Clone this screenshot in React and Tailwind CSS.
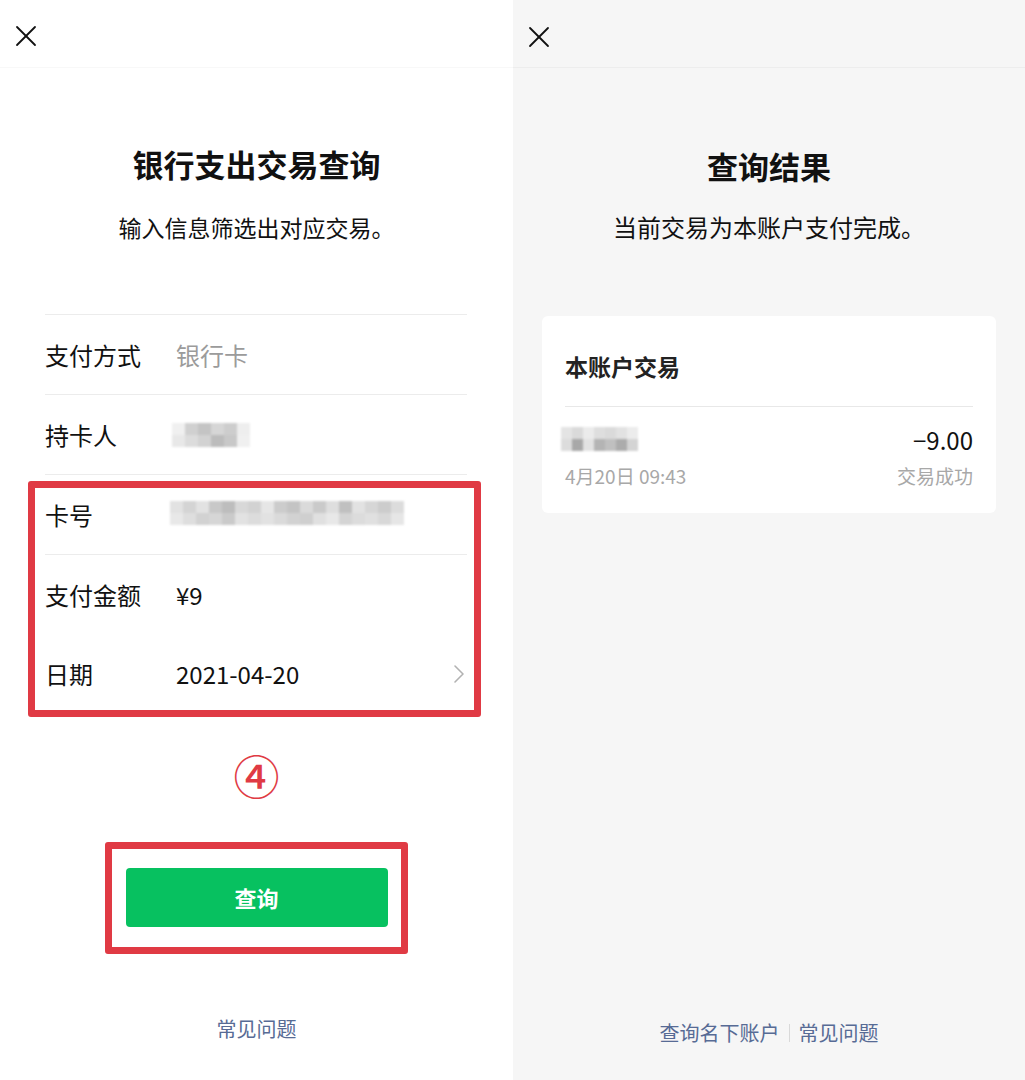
import { X, ChevronRight } from "lucide-react";

const font = "font-['Noto_Sans_CJK_SC','Noto_Sans',sans-serif]";

// mosaic blur placeholder for hidden personal info
function Mosaic({ cells, className = "", size = "w-[13px] h-[12px]" }) {
  return (
    <div className={`flex blur-[1px] ${className}`}>
      {cells.map((c, i) => (
        <div key={i} className="flex flex-col">
          <div className={`${size} ${c[0]}`} />
          <div className={`${size} ${c[1]}`} />
        </div>
      ))}
    </div>
  );
}

const holderCells = [
  ["bg-[#f0f0f0]", "bg-[#e8e8e8]"],
  ["bg-[#d0d0d0]", "bg-[#dcdcdc]"],
  ["bg-[#c4c4c4]", "bg-[#d2d2d2]"],
  ["bg-[#d6d6d6]", "bg-[#bcbcbc]"],
  ["bg-[#cdcdcd]", "bg-[#c8c8c8]"],
  ["bg-[#eeeeee]", "bg-[#f0f0f0]"],
];

const cardCells = [
  ["bg-[#e2e2e2]", "bg-[#e8e8e8]"],
  ["bg-[#d4d4d4]", "bg-[#dedede]"],
  ["bg-[#e2e2e2]", "bg-[#d2d2d2]"],
  ["bg-[#c8c8c8]", "bg-[#d6d6d6]"],
  ["bg-[#bdbdbd]", "bg-[#cacaca]"],
  ["bg-[#d8d8d8]", "bg-[#e2e2e2]"],
  ["bg-[#d2d2d2]", "bg-[#dcdcdc]"],
  ["bg-[#e6e6e6]", "bg-[#e2e2e2]"],
  ["bg-[#cccccc]", "bg-[#dadada]"],
  ["bg-[#c4c4c4]", "bg-[#d2d2d2]"],
  ["bg-[#dadada]", "bg-[#cfcfcf]"],
  ["bg-[#cacaca]", "bg-[#e0e0e0]"],
  ["bg-[#dedede]", "bg-[#e8e8e8]"],
  ["bg-[#c0c0c0]", "bg-[#d4d4d4]"],
  ["bg-[#e2e2e2]", "bg-[#dcdcdc]"],
  ["bg-[#d6d6d6]", "bg-[#e0e0e0]"],
  ["bg-[#cccccc]", "bg-[#d8d8d8]"],
  ["bg-[#dcdcdc]", "bg-[#e6e6e6]"],
];

const nameCells = [
  ["bg-[#e4e4e4]", "bg-[#dcdcdc]"],
  ["bg-[#dadada]", "bg-[#a8a8a8]"],
  ["bg-[#ebebeb]", "bg-[#e2e2e2]"],
  ["bg-[#dedede]", "bg-[#b4b4b4]"],
  ["bg-[#dadada]", "bg-[#c0c0c0]"],
  ["bg-[#e2e2e2]", "bg-[#acacac]"],
  ["bg-[#ececec]", "bg-[#d4d4d4]"],
];

function Row({ label, children, border = true, chevron }) {
  return (
    <div className={`h-[80px] flex items-center ${border ? "border-t border-[#ececec]" : ""}`}>
      <div className="w-[131px] text-[24px] text-[#111]">{label}</div>
      <div className="flex-1 text-[24px] text-[#111]">{children}</div>
      {chevron && <ChevronRight className="w-[32px] h-[32px] text-[#b2b2b2] -mr-[8px]" strokeWidth={1.2} />}
    </div>
  );
}

function QueryPanel() {
  return (
    <div className="w-[513px] h-[1080px] bg-white flex flex-col">
      <div className="h-[68px] flex items-start pt-[18px] pl-[8px] border-b border-[#f8f8f8]">
        <X className="w-[36px] h-[36px] text-[#111]" strokeWidth={1.2} />
      </div>
      <h1 className="mt-[76px] text-center text-[31px] leading-[40px] font-bold text-[#111]">银行支出交易查询</h1>
      <p className="mt-[27px] text-center text-[23px] leading-[32px] text-[#111]">输入信息筛选出对应交易。</p>

      <div className="relative mt-[71px] mx-[45px] w-[422px]">
        <Row label="支付方式">
          <span className="text-[#9b9b9b]">银行卡</span>
        </Row>
        <Row label="持卡人">
          <Mosaic cells={holderCells} className="-ml-[4px]" />
        </Row>
        <Row label="卡号">
          <Mosaic cells={cardCells} className="-ml-[6px] -mt-[4px]" />
        </Row>
        <Row label="支付金额">¥9</Row>
        <Row label="日期" border={false} chevron>
          2021-04-20
        </Row>
        <div className="absolute left-[-17px] top-[167px] w-[453px] h-[236px] border-[7px] border-[#e03a44] rounded-[3px]" />
      </div>

      <div className="mt-[36px] text-center text-[46px] leading-[48px] font-medium text-[#e03a44]">④</div>

      <div className="mt-[44px] mx-auto w-[303px] h-[112px] border-[7px] border-[#e03a44] rounded-[3px] flex items-center justify-center">
        <button className="w-[262px] h-[59px] -mt-[2px] rounded-[4px] bg-[#07c160] text-white text-[22px] font-bold">查询</button>
      </div>

      <div className="mt-auto mb-[36px] text-center text-[20px] text-[#576b95]">常见问题</div>
    </div>
  );
}

function ResultPanel() {
  return (
    <div className="flex-1 h-[1080px] bg-[#f6f6f6] flex flex-col">
      <div className="h-[68px] flex items-start pt-[19px] pl-[8px] border-b border-[#ededed]">
        <X className="w-[36px] h-[36px] text-[#111]" strokeWidth={1.2} />
      </div>
      <h1 className="mt-[78px] text-center text-[31px] leading-[40px] font-bold text-[#111]">查询结果</h1>
      <p className="mt-[25px] text-center text-[24px] leading-[32px] text-[#111]">当前交易为本账户支付完成。</p>

      <div className="mt-[73px] mx-[29px] bg-white rounded-[6px] px-[23px] h-[197px]">
        <div className="h-[91px] flex items-end pb-[24px] border-b border-[#e8e8e8]">
          <span className="text-[23px] leading-[32px] font-bold text-[#222]">本账户交易</span>
        </div>
        <div className="pt-[17px] flex justify-between">
          <div className="flex flex-col">
            <Mosaic cells={nameCells} size="w-[11px] h-[12px]" className="-ml-[4px] mt-[3px]" />
            <span className="mt-[11px] text-[19px] leading-[28px] text-[#a8a8a8]">4月20日 09:43</span>
          </div>
          <div className="flex flex-col items-end">
            <span className="text-[24px] leading-[32px] text-[#111]">−9.00</span>
            <span className="mt-[6px] text-[19px] leading-[28px] text-[#a8a8a8]">交易成功</span>
          </div>
        </div>
      </div>

      <div className="mt-auto mb-[32px] flex items-center justify-center gap-[9px] text-[20px] text-[#576b95]">
        <span>查询名下账户</span>
        <span className="w-px h-[18px] bg-[#d9d9d9]" />
        <span>常见问题</span>
      </div>
    </div>
  );
}

export default function App() {
  return (
    <div className={`w-[1025px] h-[1080px] flex ${font}`}>
      <QueryPanel />
      <ResultPanel />
    </div>
  );
}
